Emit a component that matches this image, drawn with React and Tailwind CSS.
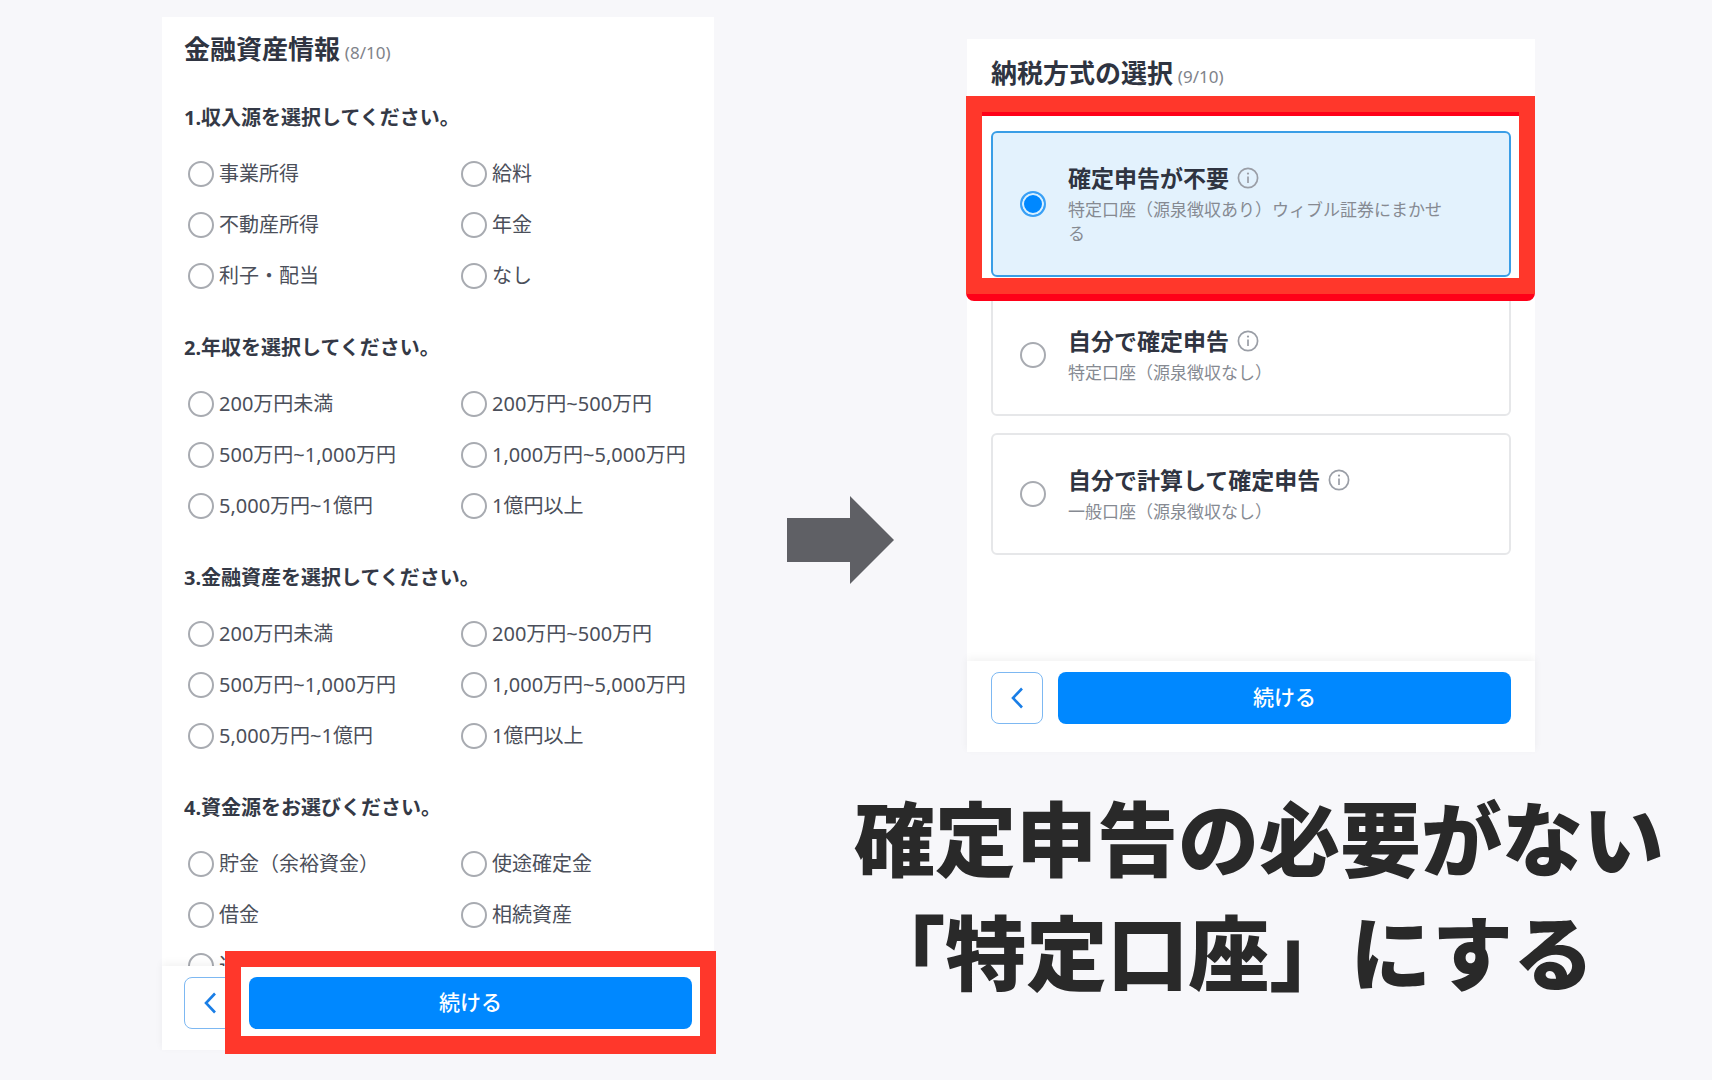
import React from 'react';

const questions = [
  {
    id: 'income-source',
    title: '1.収入源を選択してください。',
    options: ['事業所得', '給料', '不動産所得', '年金', '利子・配当', 'なし']
  },
  {
    id: 'annual-income',
    title: '2.年収を選択してください。',
    options: ['200万円未満', '200万円~500万円', '500万円~1,000万円', '1,000万円~5,000万円', '5,000万円~1億円', '1億円以上']
  },
  {
    id: 'financial-assets',
    title: '3.金融資産を選択してください。',
    options: ['200万円未満', '200万円~500万円', '500万円~1,000万円', '1,000万円~5,000万円', '5,000万円~1億円', '1億円以上']
  },
  {
    id: 'fund-source',
    title: '4.資金源をお選びください。',
    options: ['貯金（余裕資金）', '使途確定金', '借金', '相続資産', '退職金']
  }
];

const taxOptions = [
  {
    id: 'no-filing',
    title: '確定申告が不要',
    description: '特定口座（源泉徴収あり）ウィブル証券にまかせる',
    selected: true
  },
  {
    id: 'self-filing',
    title: '自分で確定申告',
    description: '特定口座（源泉徴収なし）'
  },
  {
    id: 'self-calculated',
    title: '自分で計算して確定申告',
    description: '一般口座（源泉徴収なし）'
  }
];

const Radio = (props) => (
  <input
    type="radio"
    className="size-[26px] shrink-0 appearance-none rounded-full border-2 border-[#a8abb1] bg-white checked:border-[#3aa0f5] checked:bg-[#0088ff] checked:shadow-[inset_0_0_0_2px_#d8f0ff]"
    {...props}
  />
);

const InfoIcon = () => (
  <svg viewBox="0 0 22 22" className="size-[22px] shrink-0" fill="none" stroke="#9a9ea6" aria-hidden="true">
    <circle cx="11" cy="11" r="9.6" strokeWidth="1.7" />
    <path d="M11 9.5v6.5" strokeWidth="1.7" />
    <circle cx="11" cy="6.6" r="1.1" fill="#9a9ea6" stroke="none" />
  </svg>
);

const PanelTitle = ({ title, step }) => (
  <h2 className="text-[26px] leading-9 font-bold text-[#2f3441]">
    {title} <span className="-ml-0.5 text-[17px] font-normal text-[#80838a]">({step}/10)</span>
  </h2>
);

const PanelFooter = ({ className, children }) => (
  <div className={`relative flex bg-white pt-[11px] shadow-[0_-3px_8px_rgba(0,0,0,0.05)] ${className}`}>
    <button
      type="button"
      aria-label="戻る"
      className="flex size-[52px] shrink-0 items-center justify-center rounded-lg border border-[#7db8f2] bg-white"
    >
      <svg viewBox="0 0 14 24" className="h-6 w-3.5" fill="none" stroke="#1a7ee6" strokeWidth="2.6" aria-hidden="true">
        <path d="M12 2.5 3 12l9 9.5" />
      </svg>
    </button>
    <button type="button" className="h-[52px] flex-1 rounded-lg bg-[#0088ff] text-[21px] font-medium text-white">
      続ける
    </button>
    {children}
  </div>
);

const Question = ({ question }) => (
  <fieldset>
    <legend className="mb-[15px] text-xl leading-[30px] font-bold text-[#343946]">{question.title}</legend>
    <div className="grid grid-cols-[273fr_231fr] pl-1">
      {question.options.map((option) => (
        <label key={option} className="flex h-[51px] items-center gap-[5px] text-xl whitespace-nowrap text-[#4b4f5a]">
          <Radio name={question.id} />
          {option}
        </label>
      ))}
    </div>
  </fieldset>
);

const TaxOption = ({ option }) => (
  <div className="relative">
    <label
      className={`flex items-center gap-[22px] rounded-md border-2 pr-[55px] pl-[27px] ${
        option.selected ? 'min-h-[146px] border-[#3a9ee6] bg-[#e3f2fd]' : 'min-h-[122px] border-[#e6e7e9] bg-white'
      }`}
    >
      <Radio name="tax" defaultChecked={option.selected} />
      <span>
        <span className="mb-1 flex items-center gap-2 text-[23px] leading-8 font-bold text-[#2f3441]">
          {option.title}
          <InfoIcon />
        </span>
        <span className="block text-[17px] leading-6 text-[#868a92]">{option.description}</span>
      </span>
    </label>
    {option.selected && (
      <>
        <span className="pointer-events-none absolute -top-[35px] -right-6 -bottom-6 -left-[25px] z-10 rounded-b-lg border-x-16 border-t-20 border-b-23 border-[#ff0018]" />
        <span className="pointer-events-none absolute -top-[35px] -right-6 -bottom-[17px] -left-[25px] z-10 border-16 border-[#ff372b]" />
      </>
    )}
  </div>
);

const App = () => {
  return (
    <main className="flex h-screen gap-[73px] overflow-hidden bg-[#f7f7fa] pr-[44px] pl-[162px] font-['Noto_Sans','Noto_Sans_CJK_JP',sans-serif]">
      <section className="mt-[17px] mb-[30px] flex min-w-0 flex-[552] flex-col bg-white">
        <div className="flex min-h-0 flex-1 flex-col overflow-hidden px-[22px] pt-[14px]">
          <PanelTitle title="金融資産情報" step={8} />
          <div className="mt-8 flex flex-col gap-8">
            {questions.map((question) => (
              <Question key={question.id} question={question} />
            ))}
          </div>
        </div>
        <PanelFooter className="gap-[13px] px-[22px] pb-[21px]">
          <span className="pointer-events-none absolute -top-[15px] -right-0.5 -bottom-1 left-[63px] border-16 border-b-18 border-[#ff372b]" />
        </PanelFooter>
      </section>

      <div className="min-w-0 flex-[881] pt-[39px]">
        <div className="flex items-end gap-[73px] pr-[133px]">
          <svg viewBox="0 0 107 88" className="mb-42 w-[107px] shrink-0" fill="#5f6065" aria-hidden="true">
            <path d="M0 22h63V0l44 44-44 44V66H0z" />
          </svg>
          <section className="min-w-0 flex-1 bg-white">
            <div className="px-6 pt-4 pb-[106px]">
              <PanelTitle title="納税方式の選択" step={9} />
              <div className="mt-9 flex flex-col gap-[17px]">
                {taxOptions.map((option) => (
                  <TaxOption key={option.id} option={option} />
                ))}
              </div>
            </div>
            <PanelFooter className="gap-[15px] px-6 pb-7" />
          </section>
        </div>
        <p className="mt-[30px] pr-1 text-right text-[81px] leading-[114px] font-black whitespace-nowrap text-[#292929]">
          <span className="block">確定申告の必要がない</span>
          <span className="block pr-[70px]">「特定口座」にする</span>
        </p>
      </div>
    </main>
  );
};

export default App;
